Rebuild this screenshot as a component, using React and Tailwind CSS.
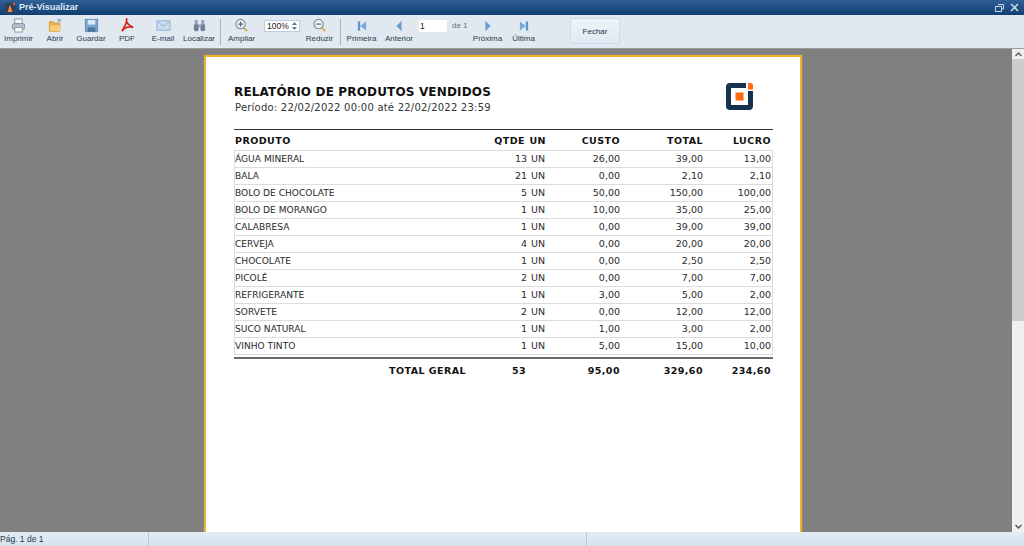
const rows = [
  ["ÁGUA MINERAL", "13", "26,00", "39,00", "13,00"],
  ["BALA", "21", "0,00", "2,10", "2,10"],
  ["BOLO DE CHOCOLATE", "5", "50,00", "150,00", "100,00"],
  ["BOLO DE MORANGO", "1", "10,00", "35,00", "25,00"],
  ["CALABRESA", "1", "0,00", "39,00", "39,00"],
  ["CERVEJA", "4", "0,00", "20,00", "20,00"],
  ["CHOCOLATE", "1", "0,00", "2,50", "2,50"],
  ["PICOLÉ", "2", "0,00", "7,00", "7,00"],
  ["REFRIGERANTE", "1", "3,00", "5,00", "2,00"],
  ["SORVETE", "2", "0,00", "12,00", "12,00"],
  ["SUCO NATURAL", "1", "1,00", "3,00", "2,00"],
  ["VINHO TINTO", "1", "5,00", "15,00", "10,00"],
];

const I = ({ children, s = 15 }) => (
  <svg width={s} height={s} viewBox="0 0 16 16" className="block">{children}</svg>
);

const icons = {
  print: <I><rect x="4" y="1" width="8" height="5" fill="#f2f5f8" stroke="#8a97a6" /><rect x="1.5" y="6" width="13" height="6" rx="1.5" fill="#b4c0ce" stroke="#8492a5" /><rect x="4" y="10" width="8" height="5" fill="#f4f6f8" stroke="#8a97a6" /></I>,
  open: <I><path d="M1.5 4h4l1 1.5h6V14h-11z" fill="#eeb04a" stroke="#d09536" /><path d="M2 8h11v6H2z" fill="#f7cf7c" /><rect x="10" y="1" width="4" height="3" fill="#9fb4c8" /></I>,
  save: <I><path d="M1.5 1.5h13v13h-13z" fill="#7ba6d4" stroke="#5a86b6" /><rect x="4" y="2" width="8" height="5" fill="#dbe7f3" /><rect x="4" y="10" width="8" height="4.500" fill="#4a769f" /></I>,
  pdf: <I><path d="M7 1c-1 3 2 7 7 9-4-1-9 0-12 4 3-5 6-9 5-13z" fill="none" stroke="#d42a1e" strokeWidth="1.800" /></I>,
  mail: <I><rect x="1" y="3" width="14" height="10" fill="#c9dcf0" stroke="#8fb0d2" /><path d="M1.500 3.500 8 9l6.500-5.500" fill="none" stroke="#8fb0d2" /></I>,
  find: <I><rect x="2" y="6" width="5" height="8" rx="2" fill="#6c819a" /><rect x="9" y="6" width="5" height="8" rx="2" fill="#6c819a" /><rect x="3" y="2" width="3" height="5" fill="#8fa2b8" /><rect x="10" y="2" width="3" height="5" fill="#8fa2b8" /><rect x="6.500" y="7" width="3" height="3" fill="#8fa2b8" /></I>,
  zoomIn: <I><circle cx="7" cy="6.500" r="5" fill="#e9eff5" stroke="#7d8c9d" strokeWidth="1.200" /><path d="M4.500 6.500h5M7 4v5" stroke="#4f6278" strokeWidth="1.200" /><path d="m10.500 10.500 3.500 3.500" stroke="#d0ac45" strokeWidth="2" /></I>,
  zoomOut: <I><circle cx="7" cy="6.500" r="5" fill="#e9eff5" stroke="#7d8c9d" strokeWidth="1.200" /><path d="M4.500 6.500h5" stroke="#4f6278" strokeWidth="1.200" /><path d="m10.500 10.500 3.500 3.500" stroke="#d0ac45" strokeWidth="2" /></I>,
  first: <I s={12}><rect x="2.500" y="2" width="3" height="12" fill="#5b94cf" /><path d="M13.500 2v12L5.500 8z" fill="#7aa9da" /></I>,
  prev: <I s={12}><path d="M11.500 1v14L4.500 8z" fill="#6a9fd6" /></I>,
  next: <I s={12}><path d="M4.500 1v14l7-7z" fill="#6a9fd6" /></I>,
  last: <I s={12}><rect x="10.500" y="2" width="3" height="12" fill="#5b94cf" /><path d="M2.500 2v12l8-6z" fill="#7aa9da" /></I>,
};

const Tool = ({ icon, label, w = "w-[36px]" }) => (
  <div className={`${w} flex flex-col items-center shrink-0`}>
    <div className="h-[15px] flex items-center">{icons[icon]}</div>
    <div className="text-[8px] leading-[11px] text-[#2b3d50] whitespace-nowrap">{label}</div>
  </div>
);

const Sep = () => <div className="w-px h-[26px] bg-[#a9b4bf] shrink-0 self-start mt-[1px]" />;

export default function App() {
  return (
    <div className="w-[1024px] h-[546px] overflow-hidden flex flex-col bg-[#808080] font-['Liberation_Sans',sans-serif]">
      <div className="h-[15px] shrink-0 flex items-center bg-gradient-to-b from-[#2f6096] to-[#123f72] pl-[4px] pr-[5px]">
        <svg width="12" height="12" viewBox="0 0 12 12" className="shrink-0">
          <rect x="1" y="1" width="10" height="10" rx="1.500" fill="#2d3f52" />
          <path d="M6 2.500 8.500 10h-5z" fill="#f08a3c" />
          <circle cx="10" cy="2" r="1.200" fill="#f25a1e" />
        </svg>
        <div className="ml-[3px] text-[9px] leading-[15px] font-bold text-[#dfeaf4]">Pré-Visualizar</div>
        <div className="ml-auto flex items-center gap-[6px]">
          <svg width="9" height="8" viewBox="0 0 9 8">
            <path d="M3 .5h5.500v4.500H7M.5 2.500H6.500V7.500H.5z" fill="none" stroke="#c8d8e6" />
          </svg>
          <svg width="9" height="9" viewBox="0 0 9 9">
            <path d="m1 1 7 7M8 1 1 8" stroke="#c8d8e6" strokeWidth="1.600" />
          </svg>
        </div>
      </div>

      <div className="h-[33px] shrink-0 bg-[#e1e8f0] flex items-start pt-[3px] text-[#23364a]">
        <Tool icon="print" label="Imprimir" w="w-[37px]" />
        <Tool icon="open" label="Abrir" />
        <Tool icon="save" label="Guardar" />
        <Tool icon="pdf" label="PDF" />
        <Tool icon="mail" label="E-mail" />
        <Tool icon="find" label="Localizar" />
        <div className="w-[3px] shrink-0" />
        <Sep />
        <Tool icon="zoomIn" label="Ampliar" w="w-[41px]" />
        <div className="w-[36px] h-[12px] mt-[2px] ml-[2px] shrink-0 flex items-center bg-white border border-[#b9cde0] text-[8.500px] leading-[10px] text-[#222] pl-[2px]">
          100%
          <svg width="7" height="10" viewBox="0 0 7 10" className="ml-auto mr-[1px]">
            <path d="M3.500 1 6 4H1zM3.500 9 1 6h5z" fill="#5c7590" />
          </svg>
        </div>
        <Tool icon="zoomOut" label="Reduzir" w="w-[39px]" />
        <div className="w-[1px] shrink-0" />
        <Sep />
        <Tool icon="first" label="Primeira" w="w-[41px]" />
        <Tool icon="prev" label="Anterior" w="w-[34px]" />
        <div className="mt-[2px] ml-[3px] w-[28px] h-[12px] shrink-0 bg-white text-[8.500px] leading-[12px] text-[#222] pl-[1px]">1</div>
        <div className="mt-[2px] ml-[5px] w-[17px] shrink-0 text-[8px] leading-[12px] text-[#5d7288] whitespace-nowrap">de 1</div>
        <Tool icon="next" label="Próxima" w="w-[37px]" />
        <Tool icon="last" label="Última" w="w-[35px]" />
        <div className="ml-[29px] w-[50px] h-[26px] shrink-0 rounded-[2px] border border-[#c7dcec] bg-gradient-to-b from-[#eef3f8] to-[#dfeaf3] text-[8px] leading-[26px] text-center text-[#23364a]">
          Fechar
        </div>
      </div>

      <div className="flex-1 min-h-0 flex border-t border-[#9c9c9c]">
        <div className="flex-1 min-w-0 overflow-hidden pl-[204px] pt-[6px] bg-[#808080]">
          <div className="w-[598px] h-[600px] border-2 border-[#eeb030] outline outline-1 outline-[#8f8a78] bg-white pl-[28px] pt-[27px] font-['DejaVu_Sans',sans-serif] text-[#1c1c1c]">
            <div className="flex items-start w-[540px]">
              <div>
                <div className="text-[12px] leading-[16px] font-bold text-[#111] tracking-[0.16px] whitespace-nowrap">RELATÓRIO DE PRODUTOS VENDIDOS</div>
                <div className="ml-[1px] mt-[1px] text-[10px] leading-[13px] tracking-[0.22px] text-[#333] whitespace-nowrap">Período: 22/02/2022 00:00 até 22/02/2022 23:59</div>
              </div>
              <svg width="27" height="27" viewBox="0 0 27 27" className="ml-auto mr-[21px] mt-[-1px] shrink-0">
                <path d="M20 0H4a4 4 0 0 0-4 4v19a4 4 0 0 0 4 4h19a4 4 0 0 0 4-4V8h-5v14H5V5h15z" fill="#17324e" />
                <path d="M22 0h2a3 3 0 0 1 3 3v3.500h-5z" fill="#ff6a0d" />
                <rect x="9.500" y="9.500" width="8" height="8" fill="#ff6a0d" />
              </svg>
            </div>

            <div className="w-[539px] mt-[15px] border-t border-[#333]">
              <div className="h-[20px] pt-[2px] grid grid-cols-[1fr_56px_21px_74px_83px_68px] items-center text-[9.500px] font-bold tracking-[0.45px] text-[#111] pr-[2px]">
                <div className="pl-[1px]">PRODUTO</div>
                <div className="text-right whitespace-nowrap">QTDE</div>
                <div className="text-right">UN</div>
                <div className="text-right">CUSTO</div>
                <div className="text-right">TOTAL</div>
                <div className="text-right">LUCRO</div>
              </div>
              <div className="border-l border-[#dcdcdc] border-r">
                {rows.map((r) => (
                  <div key={r[0]} className="h-[17px] border-t border-[#dcdcdc] grid grid-cols-[1fr_58px_18px_75px_83px_68px] items-center text-[9.500px] leading-[16px] text-[#2a2a2a] pr-[1px]">
                    <div className="text-[9.100px] whitespace-nowrap">{r[0]}</div>
                    <div className="text-right">{r[1]}</div>
                    <div className="text-right">UN</div>
                    <div className="text-right">{r[2]}</div>
                    <div className="text-right">{r[3]}</div>
                    <div className="text-right">{r[4]}</div>
                  </div>
                ))}
              </div>
              <div className="border-t border-[#dcdcdc] h-[3px]" />
              <div className="border-t-2 border-[#6c6c6c] h-[24px] pt-[3px] grid grid-cols-[155px_77px_60px_94px_83px_68px] items-center text-[9.500px] font-bold tracking-[0.45px] text-[#111] pr-[1px]">
                <div />
                <div className="text-right whitespace-nowrap">TOTAL GERAL</div>
                <div className="text-right">53</div>
                <div className="text-right">95,00</div>
                <div className="text-right">329,60</div>
                <div className="text-right">234,60</div>
              </div>
            </div>
          </div>
        </div>

        <div className="w-[12px] shrink-0 bg-[#f0f0f0] flex flex-col items-center">
          <div className="h-[10px] flex items-center">
            <svg width="7" height="5" viewBox="0 0 7 5"><path d="m.5 4 3-3 3 3" fill="none" stroke="#555" strokeWidth="1.300" /></svg>
          </div>
          <div className="w-full h-[262px] bg-[#cdcdcd]" />
          <div className="mt-auto h-[11px] flex items-center">
            <svg width="7" height="5" viewBox="0 0 7 5"><path d="m.5 1 3 3 3-3" fill="none" stroke="#555" strokeWidth="1.300" /></svg>
          </div>
        </div>
      </div>

      <div className="h-[14px] shrink-0 flex bg-gradient-to-b from-[#e2edf3] to-[#d5e3ed] text-[8.500px] leading-[15px] text-[#2a3a4a]">
        <div className="w-[149px] border-r border-[#b9c9d6]">Pág. 1 de 1</div>
        <div className="w-[438px] border-r border-[#b9c9d6]" />
      </div>
    </div>
  );
}
